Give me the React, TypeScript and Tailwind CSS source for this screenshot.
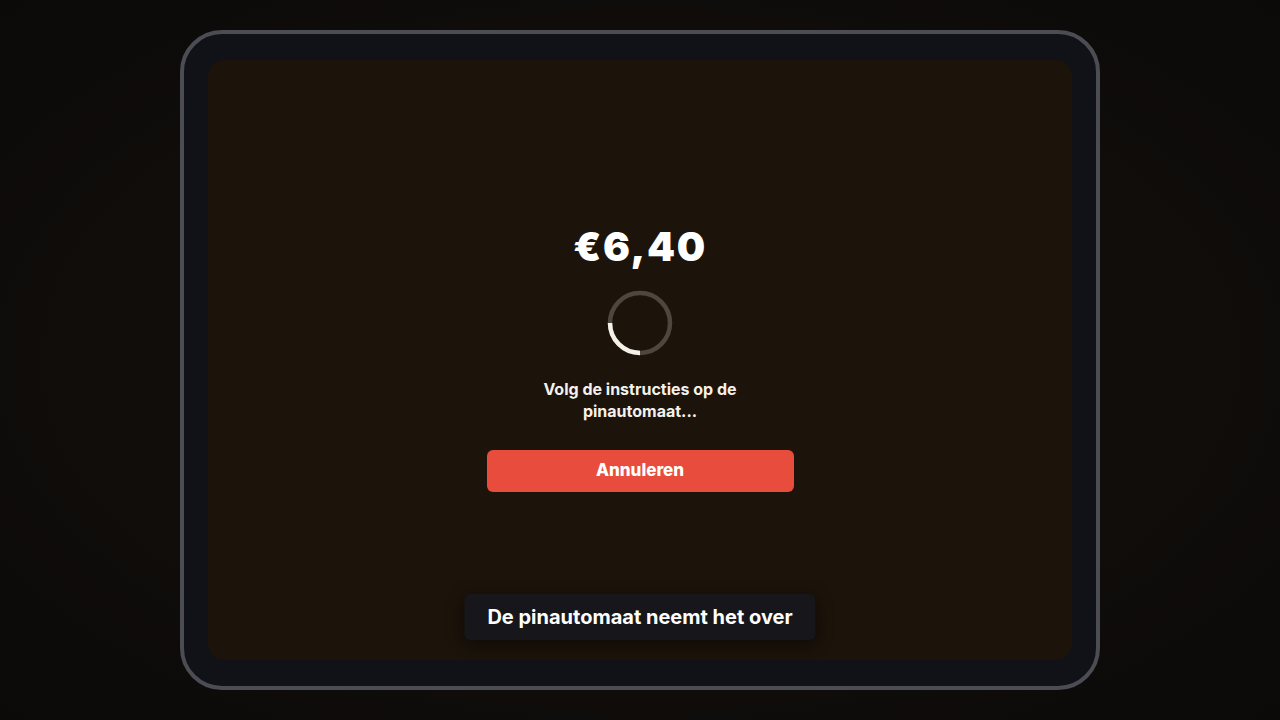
export default function App() {
  return (
    <div
      className="w-[1280px] h-[720px] flex items-center justify-center bg-[radial-gradient(ellipse_at_center,#1c150e_0%,#120e0b_45%,#0b0a09_100%)]"
      style={{ fontFamily: 'Inter, "Noto Sans", sans-serif' }}
    >
      {/* Tablet frame */}
      <div className="w-[920px] h-[660px] rounded-[42px] border-4 border-[#4b4c54] bg-[#111217] px-6 pt-[26px] pb-[26px] flex">
        {/* Screen */}
        <div className="relative flex-1 rounded-[16px] bg-[#1c130a] flex flex-col items-center justify-center pb-[5px]">
          <div className="text-[40px] leading-[48px] font-black text-white tracking-[0.04em]">€6,40</div>

          <svg className="mt-[19px]" width="66" height="66" viewBox="0 0 66 66">
            <circle cx="33" cy="33" r="30" fill="none" stroke="#4d4740" strokeWidth="4.5" />
            <path d="M3 33 A30 30 0 0 0 33 63" fill="none" stroke="#f3f0ea" strokeWidth="4.5" />
          </svg>

          <p className="mt-[22px] text-[16px] leading-[22px] font-bold text-[#f4f1ec] text-center w-[230px]">
            Volg de instructies op de pinautomaat...
          </p>

          <button className="mt-[28px] w-[307px] h-[42px] rounded-[6px] bg-[#e74c3c] text-white text-[17px] font-extrabold">
            Annuleren
          </button>

          {/* Toast */}
          <div className="absolute bottom-[20px] left-1/2 -translate-x-1/2 h-[46px] px-[23px] flex items-center rounded-[6px] bg-[#17171b] shadow-[0_4px_16px_rgba(0,0,0,0.5)]">
            <span className="text-[20px] font-bold text-white whitespace-nowrap">De pinautomaat neemt het over</span>
          </div>
        </div>
      </div>
    </div>
  );
}
